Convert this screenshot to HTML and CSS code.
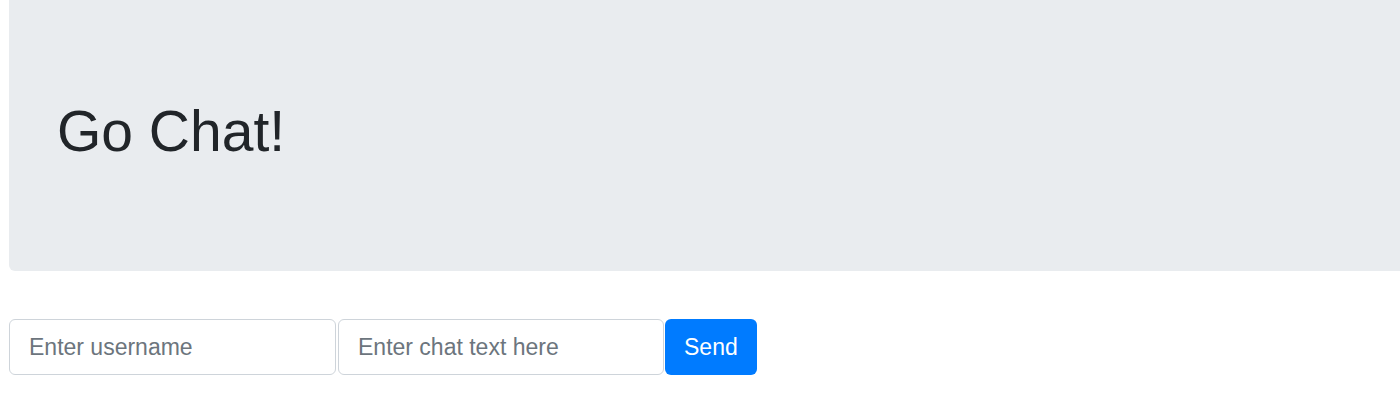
FILE: index.html
```html
<!DOCTYPE html>
<html lang="en">
  <head>
    <meta charset="UTF-8" />
    <meta name="viewport" content="width=device-width, initial-scale=1.0" />
    <link rel="stylesheet" href="styles.css">
    <title>Go Chat!</title>
  </head>
  <body>
    <div class="container">
      <div class="jumbotron">
        <h1>Go Chat!</h1>
      </div>

      <form class="chat-form" onsubmit="return false">
        <input type="text" class="form-control" placeholder="Enter username" />
        <input type="text" class="form-control" placeholder="Enter chat text here" />
        <button class="btn" type="submit">Send</button>
      </form>
    </div>
  </body>
</html>
```

FILE: styles.css
```css
* {
  box-sizing: border-box;
}

body {
  margin: 0;
  background: #fff;
  color: #212529;
  font-family: "Liberation Sans", Arial, sans-serif;
}

.container {
  padding-left: 9px;
}

.jumbotron {
  height: 271px;
  display: flex;
  align-items: center;
  padding: 0 48px 9px;
  background: #e9ecef;
  border-radius: 0 0 0 6px;
}

.jumbotron h1 {
  margin: 0;
  font-size: 57px;
  font-weight: 400;
  line-height: 1.2;
}

.chat-form {
  display: flex;
  align-items: center;
  margin-top: 48px;
}

.form-control {
  width: 327px;
  height: 56px;
  padding: 0 19px;
  margin-right: 2px;
  border: 1px solid #ced4da;
  border-radius: 6px;
  font-family: inherit;
  font-size: 23px;
  color: #495057;
}

.form-control:nth-of-type(2) {
  width: 326px;
  margin-right: 1px;
}

.form-control::placeholder {
  color: #6c757d;
}

.btn {
  height: 56px;
  padding: 0 19px;
  border: none;
  border-radius: 6px;
  background: #007bff;
  color: #fff;
  font-family: inherit;
  font-size: 23px;
  cursor: pointer;
}
```
